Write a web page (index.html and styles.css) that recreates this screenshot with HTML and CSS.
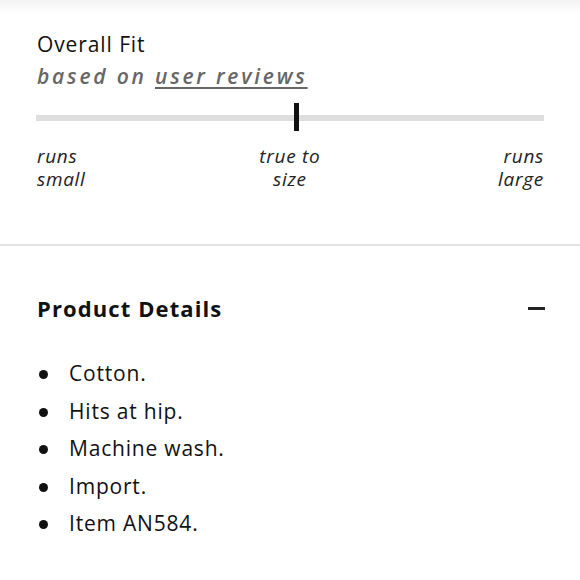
FILE: index.html
```html
<!DOCTYPE html>
<html>
<head>
<meta charset="utf-8">
<link rel="stylesheet" href="styles.css">
</head>
<body>
<div class="topshade"></div>
<section class="fit">
  <h2 class="fit-title">Overall Fit</h2>
  <p class="fit-sub">based on <a class="fit-link" href="#">user reviews</a></p>
  <div class="track"><span class="tick"></span></div>
  <div class="labels">
    <span class="lbl lbl-left">runs<br>small</span>
    <span class="lbl lbl-mid">true to<br>size</span>
    <span class="lbl lbl-right">runs<br>large</span>
  </div>
</section>
<section class="details">
  <div class="details-head">
    <h2 class="details-title">Product Details</h2>
    <span class="minus"></span>
  </div>
  <ul class="list">
    <li>Cotton.</li>
    <li>Hits at hip.</li>
    <li>Machine wash.</li>
    <li>Import.</li>
    <li>Item AN584.</li>
  </ul>
</section>
</body>
</html>
```

FILE: styles.css
```css
* { box-sizing: border-box; margin: 0; padding: 0; }
html, body { background: #fff; }
body {
  width: 580px;
  height: 580px;
  overflow: hidden;
  font-family: "Open Sans", "Liberation Sans", sans-serif;
  color: #111;
}
.topshade {
  height: 14px;
  background: linear-gradient(#f3f3f3, #fff);
}
.fit {
  padding: 16px 36px 0 37px;
  height: 232px;
  border-bottom: 2px solid #e2e2e2;
}
.fit-title {
  font-weight: 400;
  font-size: 21px;
  line-height: 28px;
  letter-spacing: 0.9px;
  color: #111;
}
.fit-sub {
  font-style: italic;
  font-weight: 600;
  font-size: 21px;
  line-height: 30px;
  letter-spacing: 2.8px;
  color: #666;
  margin-top: 3px;
}
.fit-link { color: #666; text-decoration: underline; text-underline-offset: 3px; }
.track {
  position: relative;
  margin-top: 24px;
  margin-left: -1px;
  height: 6px;
  background: #dedede;
}
.tick {
  position: absolute;
  left: 258px;
  top: -12px;
  width: 5px;
  height: 28px;
  background: #111;
}
.labels {
  display: flex;
  justify-content: space-between;
  margin-top: 24px;
  font-style: italic;
  font-size: 19px;
  line-height: 23px;
  letter-spacing: 0.7px;
  color: #222;
}
.lbl-mid { text-align: center; margin-left: -4px; }
.lbl-right { text-align: right; }
.details {
  padding: 47px 35px 0 37px;
}
.details-head {
  display: flex;
  justify-content: space-between;
  align-items: center;
}
.details-title {
  font-size: 22px;
  font-weight: 700;
  line-height: 30px;
  letter-spacing: 1.1px;
}
.minus {
  width: 17px;
  height: 3px;
  background: #222;
}
.list {
  list-style: none;
  margin-top: 32px;
}
.list li {
  position: relative;
  padding-left: 32px;
  font-size: 21px;
  line-height: 37.5px;
  letter-spacing: 0.8px;
}
.list li::before {
  content: "";
  position: absolute;
  left: 2px;
  top: 15px;
  width: 9px;
  height: 9px;
  border-radius: 50%;
  background: #111;
}
```
